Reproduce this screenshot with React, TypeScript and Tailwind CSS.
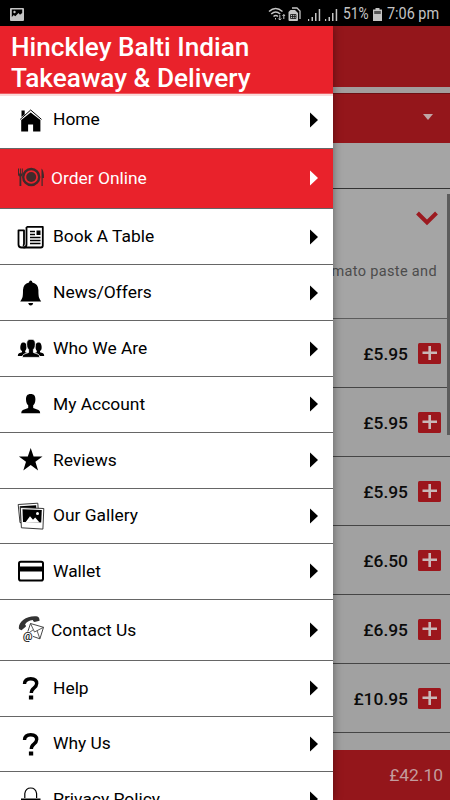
import React from 'react';
import clsx from 'clsx';

const HomeIcon = () => (
  <svg width="28" height="28" viewBox="0 0 28 28">
    <path d="M4.5 4.5h3.2v4L4.5 11z" />
    <path d="M13.700 6.400L4.200 14v11.500h6.900v-7h5v7h7.300V14z" />
    <path d="M3.200 13.400L13.700 4l10.800 9.400" fill="none" stroke="#000" strokeWidth="1" />
  </svg>
);

const PlateIcon = () => (
  <svg width="28" height="28" viewBox="0 0 28 28" fill="#3f2a2b">
    <path d="M1 4.5h1v5h.9v-5h1v5h.9v-5h1v6q0 1.6-1.500 2v9.500H2.500v-9.500Q1 12.100 1 10.500z" />
    <circle cx="14.200" cy="13" r="8" fill="none" stroke="#3f2a2b" strokeWidth="2.400" />
    <circle cx="14.200" cy="13" r="5" />
    <path d="M24.500 4.500q2.500 2 2.500 9.500h-1.300v8h-1.200z" />
  </svg>
);

const PaperIcon = () => (
  <svg width="28" height="28" viewBox="0 0 28 28" fill="none" stroke="#000">
    <path
      d="M9.500 3.800h16.300v18.700q0 2-2 2H4.500q-3 0-3-3V7.300h5.500v13.700q0 1.500-1.200 1.500"
      strokeWidth="1.800"
      strokeLinejoin="round"
    />
    <path d="M9.500 4v17.500q0 3-3 3" strokeWidth="1.800" />
    <path d="M13 8.500h5M13 11.500h5M13 14.500h10.500M13 17.500h10.500M13 20.500h10.500" strokeWidth="1.500" />
    <path d="M19.500 7.500h4v4.500h-4z" fill="#000" stroke="none" />
  </svg>
);

const BellIcon = () => (
  <svg width="28" height="28" viewBox="0 0 28 28">
    <path d="M13.700 1.600q1.500 0 1.700 2Q21.200 5 21.400 11q0 6 .7 7.800.6 1.700 2.100 3.800h-21q1.500-2.100 2.100-3.800.7-1.800.7-7.800.2-6 6-7.400.2-2 1.700-2z" />
    <path d="M11.200 24h5q-.5 2.500-2.500 2.500t-2.500-2.500z" />
  </svg>
);

const GroupIcon = () => (
  <svg width="28" height="28" viewBox="0 0 28 28">
    <path d="M6 7.500c3 0 3.500 2 3.500 4.500 0 2-.6 3-1.300 3.800v1.500L12 18.500V21H.8q0-2 1.200-2.800l3-1v-1.400C2.500 16 2.700 7.500 6 7.500z" />
    <path d="M22 7.500c-3 0-3.500 2-3.500 4.500 0 2 .6 3 1.300 3.800v1.500L16 18.500V21h11.200q0-2-1.200-2.800l-3-1v-1.400C25.500 16 25.300 7.500 22 7.500z" />
    <path
      d="M14 4.300c3.600 0 4.300 2 4.300 5 0 3-1 4.300-1.900 5.200v3l4.700 1.700q1.600.6 1.600 3.200H5.300q0-2.600 1.600-3.200l4.700-1.700v-3c-.9-.9-1.900-2.200-1.900-5.200 0-3 .7-5 4.300-5z"
      stroke="#fff"
      strokeWidth=".8"
    />
  </svg>
);

const UserIcon = () => (
  <svg width="28" height="28" viewBox="0 0 28 28">
    <path d="M13.700 4c3.600 0 4.700 2.200 4.700 5.500 0 3-1.100 4.800-2.200 5.800V18l5.300 2q1.700.7 1.700 3.200h-19q0-2.500 1.700-3.200l5.300-2v-2.700C10.100 14.300 9 12.500 9 9.500 9 6.200 10.100 4 13.700 4z" />
  </svg>
);

const StarIcon = () => (
  <svg width="28" height="28" viewBox="0 0 28 28">
    <path d="M13.700 2l2.900 8.500h8.900l-7.100 5.300 2.700 8.700-7.400-5.400-7.400 5.400L9 15.800l-7.100-5.300h8.900z" />
  </svg>
);

const GalleryIcon = () => (
  <svg width="28" height="28" viewBox="0 0 28 28">
    <path d="M1.200 2.500L20.800 1.200l1.200 18L3 20.700z" fill="#fff" stroke="#222" strokeWidth=".9" />
    <path d="M2.700 4.200l16.500-1v4L7 18.500l-3.300.3z" />
    <path d="M3.300 5.500l23.500 1-.9 20.600-21.500-1.300z" fill="#fff" stroke="#222" strokeWidth=".9" />
    <path d="M5.500 7.200l19.300.8-.6 12.600-18.200-.6z" />
    <path d="M8.500 20.300l4.500-6 3 3.500 2.200-2.300 4.300 5z" fill="#fff" />
    <circle cx="20.500" cy="11.500" r="1.500" fill="#fff" />
  </svg>
);

const CardIcon = () => (
  <svg width="28" height="28" viewBox="0 0 28 28">
    <rect x="2" y="4.800" width="24" height="18.700" rx="1.800" fill="none" stroke="#000" strokeWidth="2" />
    <path d="M2 9.500h24v5H2z" />
  </svg>
);

const ContactIcon = () => (
  <svg width="28" height="28" viewBox="0 0 28 28">
    <path
      d="M2 13C.5 6.500 9.500-1 20.500.5q2.300.8 2 4.300L17.500 6q-1.600-.3-1.700-2c-3.800.2-6.300 2-7.800 4.500q1.400 1 .7 2.300L4.500 14.300z"
      fill="#333"
    />
    <path d="M13.500 7.500l13 3.800-3.600 11.500-13-4.500z" fill="#fff" stroke="#333" strokeWidth=".9" />
    <path d="M13.500 7.500l4 8.500 9-4.700M9.900 18.300l6.300-4.500M22.900 22.800l-2.800-8" fill="none" stroke="#333" strokeWidth=".8" />
    <circle cx="11" cy="20.500" r="5" fill="#fff" />
    <text x="5.800" y="23.800" fontSize="11" fontWeight="500" fill="#111" fontFamily="Roboto, sans-serif">
      @
    </text>
  </svg>
);

const QuestionIcon = () => (
  <svg width="28" height="28" viewBox="0 0 28 28">
    <path
      d="M7.500 10q.3-5.200 6.200-5.200 6 0 6 4.800 0 2.300-2.800 4.500-2.600 2-2.600 5"
      fill="none"
      stroke="#000"
      strokeWidth="3.400"
    />
    <path d="M11.900 21.600h4.300v4h-4.300z" />
  </svg>
);

const LockIcon = () => (
  <svg width="28" height="28" viewBox="0 0 28 28">
    <path d="M7.800 13V8.500q1-5.500 5.900-5.500t5.900 5.500V13" fill="none" stroke="#000" strokeWidth="1.200" />
    <path d="M4 13.500h19.500V28H4z" />
  </svg>
);

const menu = [
  { label: 'Home', icon: <HomeIcon />, row: 'h-[55px] pb-[3px]' },
  { label: 'Order Online', icon: <PlateIcon />, row: 'h-[60px] pb-[2px]', active: true },
  { label: 'Book A Table', icon: <PaperIcon />, row: 'h-[56px]' },
  { label: 'News/Offers', icon: <BellIcon />, row: 'h-[56px]' },
  { label: 'Who We Are', icon: <GroupIcon />, row: 'h-[56px]' },
  { label: 'My Account', icon: <UserIcon />, row: 'h-[56px] pb-px' },
  { label: 'Reviews', icon: <StarIcon />, row: 'h-[56px] pb-px' },
  { label: 'Our Gallery', icon: <GalleryIcon />, row: 'h-[55px] pb-px' },
  { label: 'Wallet', icon: <CardIcon />, row: 'h-[56px] pb-px' },
  { label: 'Contact Us', icon: <ContactIcon />, row: 'h-[61px]', wide: true },
  { label: 'Help', icon: <QuestionIcon />, row: 'h-[56px] pb-px' },
  { label: 'Why Us', icon: <QuestionIcon />, row: 'h-[55px] pb-px' },
  { label: 'Privacy Policy', icon: <LockIcon />, row: 'h-[56px] pb-px' },
];

const prices = ['£5.95', '£5.95', '£5.95', '£6.50', '£6.95', '£10.95'];

const Signal = () => (
  <svg width="15" height="15" viewBox="0 0 15 15" fill="#c4c4c4">
    <path d="M1 12h1.200v2H1zM4.500 10h1.500v4H4.500zM8 6h1.500v8H8zM11.700 2h1.500v12h-1.500z" />
  </svg>
);

const StatusBar = () => (
  <div className="flex h-[26px] shrink-0 items-center bg-black pl-[10px] pr-[12px] pt-[2px] text-[#c4c4c4]">
    <svg width="14" height="13" viewBox="0 0 14 13">
      <path
        fillRule="evenodd"
        fill="#c4c4c4"
        d="M1 0h12q1 0 1 1v11q0 1-1 1H1q-1 0-1-1V1q0-1 1-1zm.800 1.500V9l2-2 1.500 1.200L8.500 5l1.500 1.800L12.200 5V1.500z"
      />
      <circle cx="4.500" cy="4" r="1.200" fill="#c4c4c4" />
    </svg>
    <div className="flex-1" />
    <svg width="18" height="14" viewBox="0 0 18 14" fill="none" stroke="#c4c4c4" strokeWidth="1.500">
      <path d="M1 4.500q6.500-6 13.500 0M3.200 7q4.600-4 9 0M5.500 9.500q2.300-2 4.500 0" />
      <path d="M7.500 11v1.500M11.800 8v5m-1.500-1.500l1.500 1.500 1.500-1.500M15.800 12V7.500M14.500 9l1.300-1.500L17 9" strokeWidth="1" />
    </svg>
    <svg width="13" height="15" viewBox="0 0 13 15" className="ml-[2px]">
      <path d="M4 1h5l3 3v8" fill="none" stroke="#c4c4c4" strokeWidth="1.300" />
      <path d="M2.500 3H7l3 3v7q0 1-1 1H1.500q-1 0-1-1V5z" fill="#c4c4c4" />
      <path d="M2.500 7.500h5.500v4H2.500zM4.500 7.500v4M6.300 7.500v4M2.500 9.500h5.500" fill="none" stroke="#111" strokeWidth=".8" />
    </svg>
    <div className="ml-[6px] flex gap-[2px]">
      <Signal />
      <Signal />
    </div>
    <span className="ml-[4px] w-[26px] origin-left scale-x-[.86] whitespace-nowrap text-[16px]">51%</span>
    <svg width="9" height="13" viewBox="0 0 9 13" className="ml-[4px]">
      <path d="M2.500 0h4v1.500H9V13H0V1.500h2.500z" fill="#c4c4c4" />
      <path d="M1.200 3h6.600v3H1.200z" fill="#555" />
    </svg>
    <span className="ml-[5px] w-[51px] origin-left scale-x-[.9] whitespace-nowrap text-[16px]">7:06 pm</span>
  </div>
);

const MenuItem = ({ label, icon, row, active, wide }: any) => (
  <li
    className={clsx(
      'flex shrink-0 items-center border-b border-[#666] pl-[17px] pr-[15px]',
      row,
      active && 'bg-[#e9222b] text-white'
    )}
  >
    {icon}
    <span className={clsx('flex-1 text-[17.4px]', active || wide ? 'ml-[6px] pt-px' : 'ml-[8px]')}>{label}</span>
    <svg width="8" height="16" viewBox="0 0 8 16" fill="currentColor">
      <path d="M0 .5L8 8 0 15.500z" />
    </svg>
  </li>
);

const Drawer = () => (
  <div className="relative z-10 flex w-[333px] shrink-0 flex-col bg-white shadow-[0_0_9px_rgba(0,0,0,0.4)]">
    <div className="h-[68px] shrink-0 border-b border-[#ee5a60] bg-[#e9222b] pl-[11px] pt-[6px] text-[26.2px] font-medium leading-[31px] text-white">
      Hinckley Balti Indian
      <br />
      Takeaway &amp; Delivery
    </div>
    <ul className="flex flex-col">
      <li className="-mb-[2px] h-[2px] shrink-0 bg-[#f9dada]" />
      {menu.map((item) => (
        <MenuItem key={item.label} {...item} />
      ))}
    </ul>
  </div>
);

const OrderPage = () => (
  <div className="relative flex flex-1 flex-col overflow-hidden bg-[#a1a1a1]">
    <div className="h-[61px] shrink-0 bg-[#94161b]" />
    <div className="h-[6px] shrink-0 bg-[#a39d9d]" />
    <div className="flex h-[50px] shrink-0 items-start justify-end border-t border-[#6d1014] bg-[#94161b] pr-[17px] pt-[20px]">
      <svg width="10" height="6" viewBox="0 0 10 6" fill="#c0a5a6">
        <path d="M0 0h10L5 6z" />
      </svg>
    </div>
    <div className="h-[46px] shrink-0 border-b border-[#333] bg-[#a5a5a5]" />
    <div className="flex h-[130px] shrink-0 flex-col items-end border-b border-[#5c5c5c] bg-[#a5a5a5] pt-[22px]">
      <svg width="22" height="15" viewBox="0 0 22 15" className="mr-[12px]">
        <path d="M1.500 2L11 11.500 20.500 2" fill="none" stroke="#9c1a20" strokeWidth="4" />
      </svg>
      <p className="mr-[13px] mt-[35px] whitespace-nowrap text-[14.5px] tracking-[.35px] text-[#4c4c4c]">mato paste and</p>
    </div>
    {prices.map((price, i) => (
      <div key={i} className="flex h-[69px] shrink-0 items-center justify-end border-b border-[#454545] pr-[9px]">
        <span className="mr-[10px] pt-[3px] text-[17.4px] font-medium text-[#0b0b0b]">{price}</span>
        <svg width="23" height="21" viewBox="0 0 23 21">
          <rect width="23" height="21" rx="1.500" fill="#9c161c" />
          <path d="M4.500 9.700h14.500M11.700 3v14" stroke="#c8b8b8" strokeWidth="2.600" />
        </svg>
      </div>
    ))}
    <div className="flex-1" />
    <div className="flex h-[50px] shrink-0 items-center justify-end bg-[#94161b] pr-[7px] text-[17.4px] text-[#c39c9e]">
      £42.10
    </div>
    <div className="absolute right-0 top-[168px] h-[241px] w-[3px] bg-[#5c5c5c]" />
  </div>
);

const App = () => {
  return (
    <div className="flex h-[800px] w-[450px] flex-col overflow-hidden font-['Roboto',sans-serif] text-black">
      <StatusBar />
      <div className="flex h-[774px] overflow-hidden">
        <Drawer />
        <OrderPage />
      </div>
    </div>
  );
};

export default App;
